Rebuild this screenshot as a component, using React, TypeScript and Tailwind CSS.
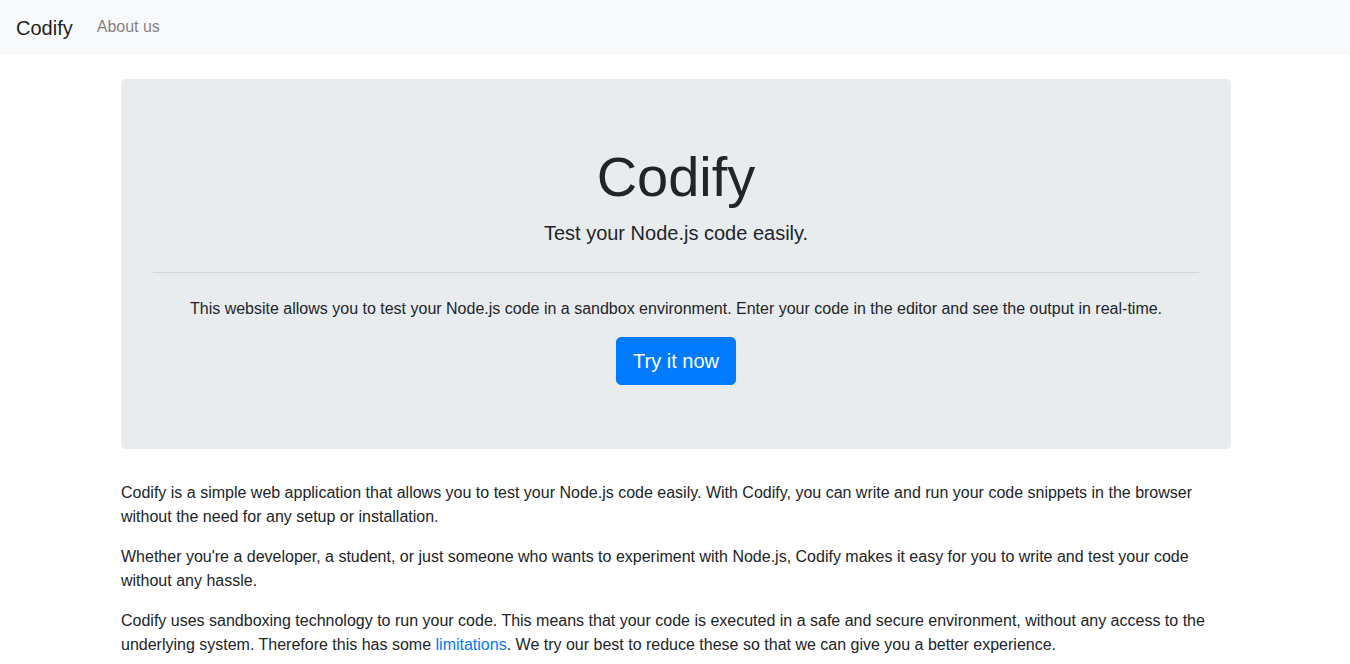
export default function App() {
  return (
    <div className="min-h-screen bg-white text-[#212529] font-['Liberation_Sans',Arial,sans-serif] text-base leading-6">
      <nav className="bg-[#f8f9fa] h-[55px] px-4 flex items-center">
        <a href="#" className="text-xl leading-[30px] mr-4 text-black/90">
          Codify
        </a>
        <ul className="flex -mt-[2px]">
          <li>
            <a href="#" className="px-2 py-2 text-black/50">
              About us
            </a>
          </li>
        </ul>
      </nav>

      <main className="w-[1140px] mx-auto pl-[16px] pr-[14px] mt-6">
        <div className="bg-[#e9ecef] rounded-[5px] px-8 pt-16 pb-16 mb-8 text-center flex flex-col items-center">
          <h1 className="text-[56px] leading-[67px] font-light mb-2">Codify</h1>
          <p className="text-xl leading-[30px] font-light">
            Test your Node.js code easily.
          </p>
          <hr className="w-full my-6 border-0 border-t border-black/10" />
          <p className="mb-4">
            This website allows you to test your Node.js code in a sandbox environment. Enter your code in the editor and see the output in real-time.
          </p>
          <a
            href="#"
            className="inline-block bg-[#007bff] text-white text-xl leading-[30px] px-4 py-2 border border-[#007bff] rounded-[5px]"
          >
            Try it now
          </a>
        </div>

        <p className="mb-4">
          Codify is a simple web application that allows you to test your Node.js code easily. With Codify, you can write and run your code snippets in the browser without the need for any setup or installation.
        </p>
        <p className="mb-4">
          Whether you're a developer, a student, or just someone who wants to experiment with Node.js, Codify makes it easy for you to write and test your code without any hassle.
        </p>
        <p className="mb-4">
          Codify uses sandboxing technology to run your code. This means that your code is executed in a safe and secure environment, without any access to the underlying system. Therefore this has some{" "}
          <a href="#" className="text-[#007bff]">
            limitations
          </a>
          . We try our best to reduce these so that we can give you a better experience.
        </p>
      </main>
    </div>
  );
}
